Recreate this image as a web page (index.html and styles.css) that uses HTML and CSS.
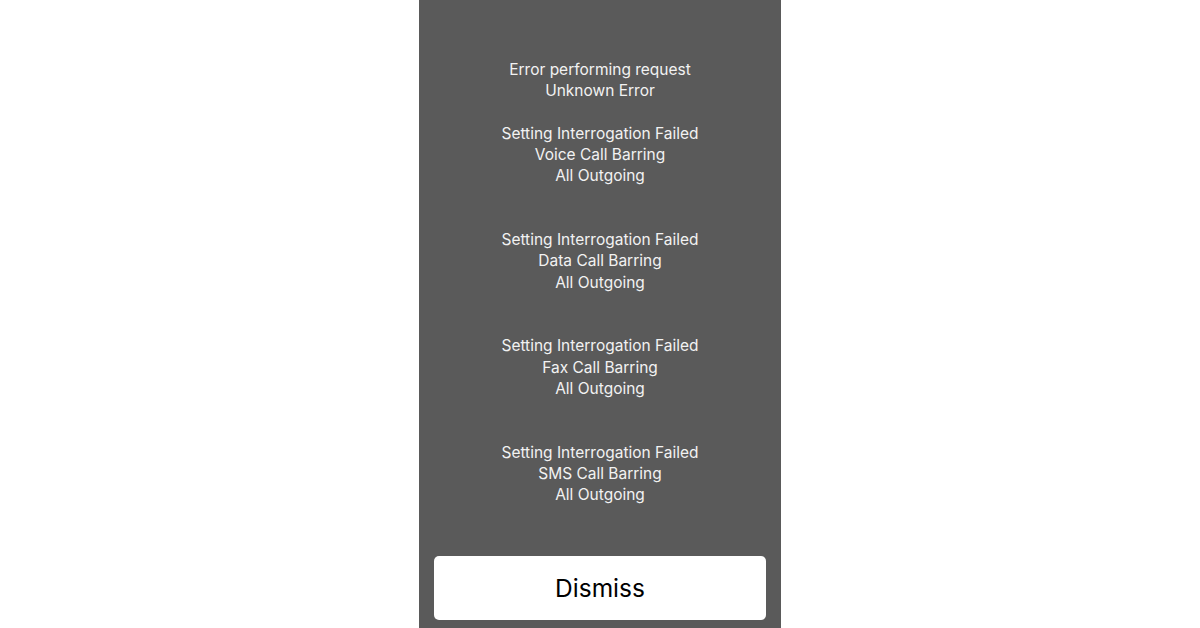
FILE: index.html
```html
<!DOCTYPE html>
<html>
<head>
<meta charset="utf-8">
<link rel="stylesheet" href="styles.css">
</head>
<body>
<div class="page">
  <div class="sheet">
    <div class="message">
      <div class="line">Error performing request</div>
      <div class="line">Unknown Error</div>
      <div class="line blank"></div>
      <div class="line">Setting Interrogation Failed</div>
      <div class="line">Voice Call Barring</div>
      <div class="line">All Outgoing</div>
      <div class="line blank"></div>
      <div class="line blank"></div>
      <div class="line">Setting Interrogation Failed</div>
      <div class="line">Data Call Barring</div>
      <div class="line">All Outgoing</div>
      <div class="line blank"></div>
      <div class="line blank"></div>
      <div class="line">Setting Interrogation Failed</div>
      <div class="line">Fax Call Barring</div>
      <div class="line">All Outgoing</div>
      <div class="line blank"></div>
      <div class="line blank"></div>
      <div class="line">Setting Interrogation Failed</div>
      <div class="line">SMS Call Barring</div>
      <div class="line">All Outgoing</div>
    </div>
    <button class="dismiss">Dismiss</button>
  </div>
</div>
</body>
</html>
```
FILE: styles.css
```css
html, body {
  margin: 0;
  padding: 0;
  background: #ffffff;
}
.page {
  width: 1200px;
  height: 628px;
  display: flex;
  justify-content: center;
}
.sheet {
  width: 362px;
  height: 628px;
  background: #5a5a5a;
  display: flex;
  flex-direction: column;
  align-items: center;
  box-sizing: border-box;
  padding: 59px 15px 8px;
}
.message {
  width: 100%;
  text-align: center;
  color: #f2f2f2;
  font-family: Inter, "Liberation Sans", sans-serif;
  font-size: 15.5px;
  line-height: 21.25px;
}
.line.blank {
  height: 21.25px;
}
.dismiss {
  margin-top: auto;
  width: 332px;
  height: 64px;
  border: none;
  border-radius: 5px;
  background: #ffffff;
  color: #000000;
  font-family: Inter, "Liberation Sans", sans-serif;
  font-size: 24.5px;
  padding: 0;
}
```
